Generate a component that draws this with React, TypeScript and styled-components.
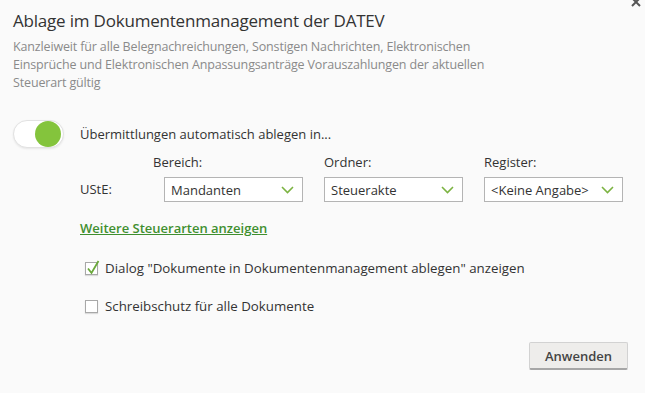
import styled, { createGlobalStyle } from 'styled-components';

const GlobalStyle = createGlobalStyle`
  html, body {
    margin: 0;
    padding: 0;
    background: #fafafa;
  }
  body {
    font-family: "Open Sans", "Noto Sans", sans-serif;
    color: #333;
  }
`;

const Dialog = styled.div`
  position: relative;
  width: 645px;
  height: 393px;
  box-sizing: border-box;
  padding: 8px 13px 0 13px;
  overflow: hidden;
`;

const Close = styled.svg`
  position: absolute;
  top: -3px;
  right: 4px;
`;

const Title = styled.h1`
  margin: 0;
  font-size: 17px;
  line-height: 26px;
  font-weight: 400;
  color: #333;
  letter-spacing: -0.2px;
`;

const Description = styled.p`
  margin: 4px 0 0 0;
  font-size: 12.5px;
  line-height: 18px;
  color: #8a8a8a;
  width: 500px;
  letter-spacing: -0.15px;
`;

const ToggleRow = styled.div`
  display: flex;
  align-items: center;
  gap: 16px;
  margin-top: 28px;
  font-size: 13px;
`;

const Track = styled.div<{ $on: boolean }>`
  width: 51px;
  height: 28px;
  box-sizing: border-box;
  border: 1px solid #e2e2e2;
  border-radius: 14px;
  background: #fff;
  display: flex;
  align-items: center;
  justify-content: ${p => (p.$on ? 'flex-end' : 'flex-start')};
  padding: 0 2px;
  box-shadow: 0 1px 2px rgba(0, 0, 0, 0.08);
`;

const Knob = styled.div`
  width: 26px;
  height: 26px;
  border-radius: 50%;
  background: #84c43c;
`;

const FieldGrid = styled.div`
  display: grid;
  grid-template-columns: 63px 139px 139px 139px;
  column-gap: 21px;
  row-gap: 6px;
  margin: 5px 0 0 67px;
  font-size: 13px;
  align-items: center;
`;

const ColLabel = styled.div<{ $shift?: number }>`
  line-height: 18px;
  margin-left: ${p => p.$shift ?? 0}px;
`;

const RowLabel = styled.div`
  line-height: 25px;
`;

const Select = styled.div`
  height: 25px;
  box-sizing: border-box;
  border: 1px solid #b4b4b4;
  background: #fff;
  display: flex;
  align-items: center;
  justify-content: space-between;
  padding: 0 8px 0 6px;
  font-size: 13px;
`;

const Link = styled.a`
  display: inline-block;
  margin: 17px 0 0 67px;
  font-size: 13px;
  font-weight: 600;
  color: #3f8f2f;
  text-decoration: underline;
`;

const CheckList = styled.div`
  display: flex;
  flex-direction: column;
  gap: 20px;
  margin: 21px 0 0 72px;
`;

const CheckRow = styled.label`
  display: flex;
  align-items: center;
  gap: 7px;
  font-size: 13.3px;
  line-height: 18px;
`;

const Box = styled.span`
  width: 13px;
  height: 13px;
  box-sizing: border-box;
  border: 1px solid #a8a8a8;
  background: #fff;
  position: relative;
  box-shadow: 0 1px 1px rgba(0, 0, 0, 0.12);
`;

const Tick = styled.svg`
  position: absolute;
  left: 0;
  top: -3px;
`;

const Footer = styled.div`
  display: flex;
  justify-content: flex-end;
  margin: 27px 4px 0 0;
`;

const Button = styled.button`
  width: 99px;
  height: 28px;
  background: #eeedeb;
  border: 1px solid #d2d2d2;
  border-bottom: 2px solid #a6a6a6;
  border-radius: 2px;
  font-family: "Open Sans", "Noto Sans", sans-serif;
  font-size: 13px;
  font-weight: 600;
  color: #444;
`;

const Chevron = () => (
  <svg width="13" height="8" viewBox="0 0 13 8">
    <path d="M1 1 L6.5 6.5 L12 1" fill="none" stroke="#7cb342" strokeWidth="1.6" />
  </svg>
);

const Checkbox: React.FC<{ checked: boolean; label: string }> = ({ checked, label }) => (
  <CheckRow>
    <Box>
      {checked && (
        <Tick width="14" height="15" viewBox="0 0 14 15">
          <path d="M2 8.5 L5.5 13 L12.5 1" fill="none" stroke="#6aa83a" strokeWidth="1.8" />
        </Tick>
      )}
    </Box>
    {label}
  </CheckRow>
);

export default function App() {
  return (
    <Dialog>
      <GlobalStyle />
      <Close width="10" height="10" viewBox="0 0 10 10">
        <path d="M1 1 L9 9 M9 1 L1 9" stroke="#555" strokeWidth="2" />
      </Close>
      <Title>Ablage im Dokumentenmanagement der DATEV</Title>
      <Description>
        Kanzleiweit für alle Belegnachreichungen, Sonstigen Nachrichten, Elektronischen
        <br />
        Einsprüche und Elektronischen Anpassungsanträge Vorauszahlungen der aktuellen
        <br />
        Steuerart gültig
      </Description>
      <ToggleRow>
        <Track $on>
          <Knob />
        </Track>
        Übermittlungen automatisch ablegen in...
      </ToggleRow>
      <FieldGrid>
        <div />
        <ColLabel $shift={-11}>Bereich:</ColLabel>
        <ColLabel>Ordner:</ColLabel>
        <ColLabel>Register:</ColLabel>
        <RowLabel>UStE:</RowLabel>
        <Select>
          Mandanten
          <Chevron />
        </Select>
        <Select>
          Steuerakte
          <Chevron />
        </Select>
        <Select>
          &lt;Keine Angabe&gt;
          <Chevron />
        </Select>
      </FieldGrid>
      <Link>Weitere Steuerarten anzeigen</Link>
      <CheckList>
        <Checkbox checked label={'Dialog "Dokumente in Dokumentenmanagement ablegen" anzeigen'} />
        <Checkbox checked={false} label="Schreibschutz für alle Dokumente" />
      </CheckList>
      <Footer>
        <Button>Anwenden</Button>
      </Footer>
    </Dialog>
  );
}
